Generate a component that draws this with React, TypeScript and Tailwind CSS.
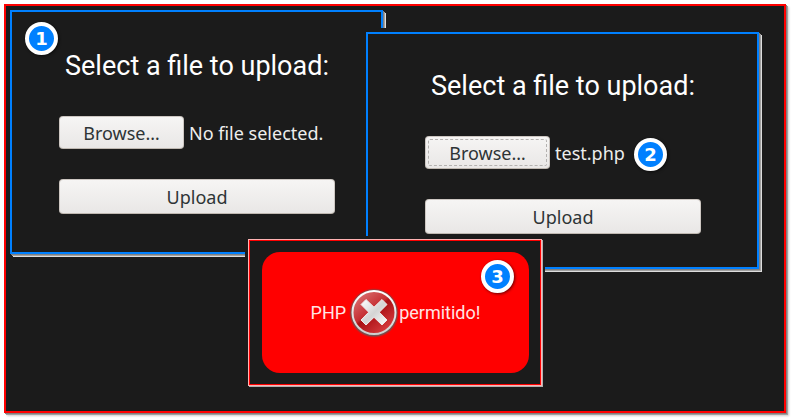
import { useId, useRef } from "react";

function StepBadge({ value, className }: { value: number; className: string }) {
  return (
    <span
      className={`absolute flex size-[33px] items-center justify-center rounded-full border-4 border-white bg-[#0080ff] font-['DejaVu_Sans',sans-serif] text-lg leading-none font-bold text-white shadow-[1px_1px_3px_rgba(0,0,0,0.6)] ${className}`}
    >
      {value}
    </span>
  );
}

const buttonLook =
  "rounded-[4px] border border-[#cdc7c2] border-b-[#bfb8b1] bg-linear-to-b from-[#f6f5f4] to-[#e9e7e6] text-[#2e3436]";

function UploadForm({ fileName, focused }: { fileName: string; focused?: boolean }) {
  const picker = useRef<HTMLInputElement>(null);
  const id = useId();
  return (
    <form className="w-[276px] text-lg" onSubmit={(e) => e.preventDefault()}>
      <h2 className="text-center font-['Roboto',sans-serif] text-[27px] leading-9 whitespace-nowrap text-white">
        Select a file to upload:
      </h2>
      <div className="mt-8 flex items-center gap-[5px]">
        <input ref={picker} id={id} type="file" className="hidden" />
        <button
          type="button"
          onClick={() => picker.current?.click()}
          className={`h-[33px] w-[125px] shrink-0 p-[2px] leading-6 ${buttonLook}`}
        >
          <span
            className={`flex h-full items-center justify-center rounded-[2px] border border-dashed ${focused ? "border-[#b4b2b0]" : "border-transparent"}`}
          >
            Browse…
          </span>
        </button>
        <label htmlFor={id} className="whitespace-nowrap text-[#eeeeec]">
          {fileName}
        </label>
      </div>
      <button type="submit" className={`mt-[30px] h-[35px] w-full ${buttonLook}`}>
        Upload
      </button>
    </form>
  );
}

const layeredShadow = "shadow-[1px_1px_0_#808080,2px_2px_0_#a0a0a0,3px_3px_0_#dddddd]";

function ErrorIcon() {
  return (
    <svg viewBox="0 0 50 50" className="size-[50px] shrink-0" aria-hidden="true">
      <defs>
        <linearGradient id="disc" x1="0" y1="0" x2="0.8" y2="1">
          <stop offset="0" stopColor="#e08080" />
          <stop offset="0.48" stopColor="#c63034" />
          <stop offset="0.54" stopColor="#a90f14" />
          <stop offset="1" stopColor="#dd4244" />
        </linearGradient>
        <linearGradient id="ring" x1="0" y1="0" x2="0" y2="1">
          <stop offset="0" stopColor="#ffffff" />
          <stop offset="1" stopColor="#cfcfcf" />
        </linearGradient>
        <radialGradient id="halo">
          <stop offset="0.9" stopColor="#6b5858" />
          <stop offset="1" stopColor="#8a3a3a" stopOpacity="0" />
        </radialGradient>
        <linearGradient id="cross" gradientUnits="userSpaceOnUse" x1="12" y1="12" x2="38" y2="38">
          <stop offset="0" stopColor="#ffffff" />
          <stop offset="0.5" stopColor="#d4d4d4" />
          <stop offset="1" stopColor="#ffffff" />
        </linearGradient>
      </defs>
      <circle cx="25" cy="25" r="25" fill="url(#halo)" />
      <circle cx="25" cy="24.5" r="21.5" fill="url(#disc)" stroke="url(#ring)" strokeWidth="2" />
      <path
        d="M17 11.5 25 19.2 33 11.5 38 16.5 30.3 24.2 38 32 33 37 25 29.3 17 37 12 32 19.7 24.2 12 16.5Z"
        fill="url(#cross)"
        stroke="#ececec"
        strokeLinejoin="round"
      />
    </svg>
  );
}

export default function App() {
  return (
    <div className="overflow-hidden bg-white pt-1 pr-[5px] pb-[5px] pl-1 font-['Noto_Sans',sans-serif]">
      <main className="border-2 border-[#ff0000] bg-[#1b1b1b] px-1 pt-1 pb-[25px] shadow-[1px_1px_0_#808080,2px_2px_0_#a0a0a0,3px_3px_2px_#cccccc]">
        <div className="flex items-start">
          <section
            className={`relative h-[244px] w-[373px] shrink-0 border-2 border-[#0080ff] bg-[#1b1b1b] pt-9 pl-[47px] ${layeredShadow}`}
          >
            <UploadForm fileName="No file selected." />
            <StepBadge value={1} className="top-[10px] left-[13px]" />
          </section>
          <div className="relative mt-[18px] -ml-[21px] shrink-0 bg-[#1b1b1b] pt-1 pl-1">
            <section
              className={`relative h-[237px] w-[393px] border-2 border-[#0080ff] bg-[#1b1b1b] pt-[34px] pl-[57px] ${layeredShadow}`}
            >
              <UploadForm fileName="test.php" focused />
              <StepBadge value={2} className="top-[104px] left-[266px]" />
            </section>
          </div>
        </div>
        <section className="relative -mt-[30px] ml-[238px] w-[294px] border border-[#ffb4b4] bg-[#1b1b1b] shadow-[1px_1px_0_#b0b0b0,0_0_0_3px_#1b1b1b]">
          <div className="border border-[#ff0000] py-[11px] pr-[11px] pl-3">
            <div
              role="alert"
              className="relative flex h-[121px] items-center justify-center rounded-[18px] bg-[#ff0000] font-['Roboto',sans-serif] text-lg text-[#ffe4e4]"
            >
              PHP
              <span className="ml-[3px]">
                <ErrorIcon />
              </span>
              permitido!
              <StepBadge value={3} className="top-[8px] right-[15px]" />
            </div>
          </div>
        </section>
      </main>
    </div>
  );
}
